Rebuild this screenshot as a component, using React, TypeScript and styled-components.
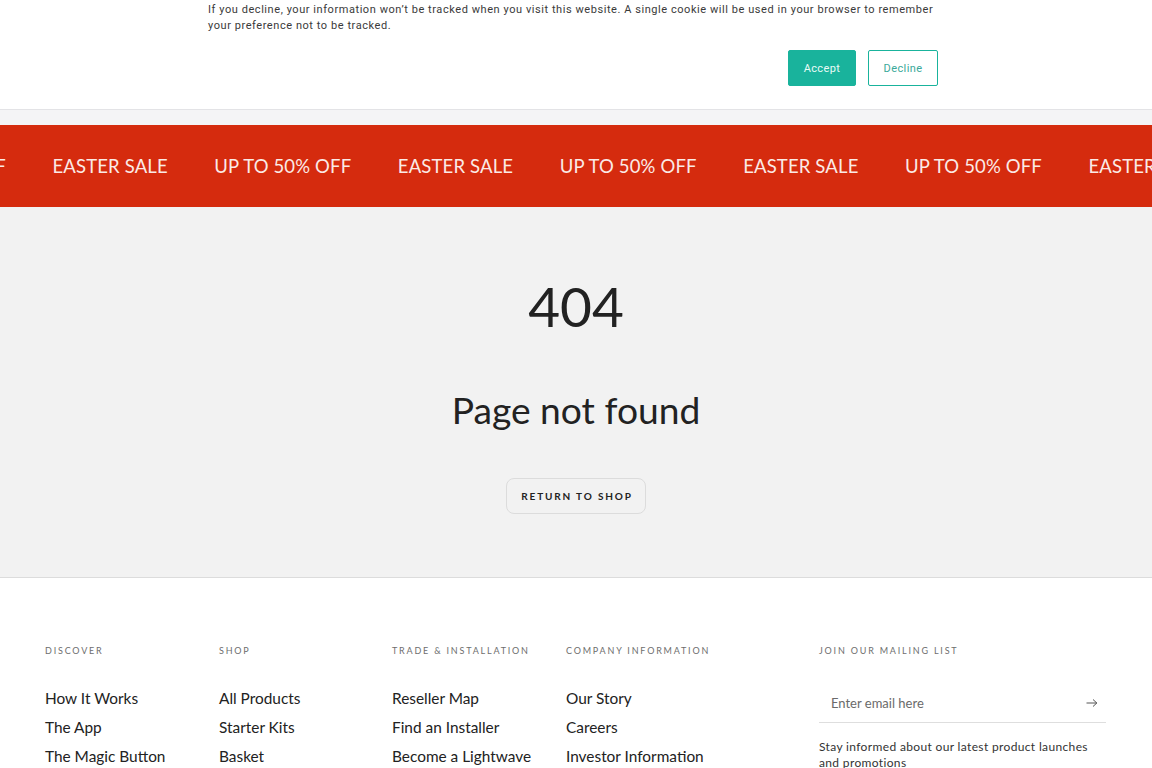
import React from "react";
import styled, { createGlobalStyle } from "styled-components";

const Global = createGlobalStyle`
  html, body { margin: 0; padding: 0; background: #ffffff; }
  body { font-family: Lato, "Noto Sans", sans-serif; color: #222; overflow: hidden; }
  * { box-sizing: border-box; }
`;

const Page = styled.div`
  width: 1152px;
  height: 768px;
  overflow: hidden;
  display: flex;
  flex-direction: column;
  & > * { flex-shrink: 0; }
`;

const CookieBar = styled.div`
  background: #fff;
  height: 110px;
  border-bottom: 1px solid #e3e3e6;
  padding: 2px 214px 0 208px;
  display: flex;
  flex-direction: column;
`;

const CookieText = styled.p`
  margin: 0;
  font-family: Roboto, "Liberation Sans", sans-serif;
  font-size: 11px;
  line-height: 16px;
  letter-spacing: 0.56px;
  color: #3a3a3a;
`;

const CookieActions = styled.div`
  display: flex;
  justify-content: flex-end;
  gap: 12px;
  margin-top: 16px;
`;

const CookieButton = styled.button<{ $primary?: boolean }>`
  height: 36px;
  padding: 0;
  width: ${(p) => (p.$primary ? "68px" : "70px")};
  border-radius: 2px;
  border: 1px solid #19b39c;
  background: ${(p) => (p.$primary ? "#19b39c" : "#fff")};
  color: ${(p) => (p.$primary ? "#e9fbf7" : "#3aa99a")};
  font-family: Roboto, "Liberation Sans", sans-serif;
  font-size: 11px;
  letter-spacing: 0.4px;
`;

const Spacer = styled.div`
  height: 15px;
  background: #f4f4f6;
`;

const Marquee = styled.div`
  height: 82px;
  background: #d52b0e;
  display: flex;
  align-items: center;
  overflow: hidden;
`;

const MarqueeTrack = styled.div`
  display: flex;
  gap: 46.5px;
  white-space: nowrap;
  margin-left: -131px;
`;

const MarqueeItem = styled.span`
  font-family: Lato, sans-serif;
  font-size: 18.5px;
  color: #fbeae6;
  letter-spacing: 0.15px;
`;

const Main = styled.main`
  background: #f2f2f2;
  height: 371px;
  border-bottom: 1px solid #dcdcdc;
  display: flex;
  flex-direction: column;
  align-items: center;
  padding-top: 66px;
`;

const Code = styled.h1`
  margin: 0;
  font-family: Lato, sans-serif;
  font-weight: 400;
  font-size: 55px;
  line-height: 66px;
  color: #222;
`;

const Title = styled.h2`
  margin: 49px 0 0;
  font-family: Lato, sans-serif;
  font-weight: 400;
  font-size: 37.2px;
  line-height: 43px;
  color: #222;
`;

const ReturnButton = styled.button`
  margin-top: 47px;
  height: 36px;
  padding: 0 12px 0 14px;
  border: 1px solid #dcdcdc;
  border-radius: 8px;
  background: #f2f2f2;
  font-family: Lato, sans-serif;
  font-weight: 700;
  font-size: 10px;
  letter-spacing: 1.85px;
  color: #222;
`;

const Footer = styled.footer`
  background: #fff;
  flex: 1;
  padding: 67px 46px 0 45px;
  display: grid;
  grid-template-columns: 174px 173px 174px 253px 1fr;
`;

const Column = styled.div`
  display: flex;
  flex-direction: column;
`;

const Heading = styled.h3`
  margin: 0 0 27px;
  font-family: Lato, sans-serif;
  font-weight: 400;
  font-size: 9px;
  line-height: 12px;
  letter-spacing: 1.8px;
  color: #6e6e6e;
  text-transform: uppercase;
`;

const LinkList = styled.ul`
  list-style: none;
  margin: 0;
  padding: 0;
  display: flex;
  flex-direction: column;
`;

const LinkItem = styled.li`
  font-family: Lato, sans-serif;
  font-size: 15.4px;
  line-height: 29px;
  color: #222;
  white-space: nowrap;
`;

const EmailRow = styled.div`
  display: flex;
  align-items: center;
  justify-content: space-between;
  height: 39px;
  padding: 0 8px 0 12px;
  border-bottom: 1px solid #dedede;
`;

const EmailPlaceholder = styled.span`
  font-family: Lato, sans-serif;
  font-size: 13px;
  color: #6a6a6a;
`;

const Blurb = styled.p`
  margin: 16px 0 0;
  max-width: 285px;
  font-family: Lato, sans-serif;
  font-size: 12px;
  line-height: 16px;
  letter-spacing: 0.35px;
  color: #333;
`;

const columns = [
  { title: "Discover", links: ["How It Works", "The App", "The Magic Button"] },
  { title: "Shop", links: ["All Products", "Starter Kits", "Basket"] },
  { title: "Trade & Installation", links: ["Reseller Map", "Find an Installer", "Become a Lightwave"] },
  { title: "Company Information", links: ["Our Story", "Careers", "Investor Information"] },
];

const items = [
  "UP TO 50% OFF",
  "EASTER SALE",
  "UP TO 50% OFF",
  "EASTER SALE",
  "UP TO 50% OFF",
  "EASTER SALE",
  "UP TO 50% OFF",
  "EASTER SALE",
];

export default function App() {
  return (
    <Page>
      <Global />
      <CookieBar>
        <CookieText>
          If you decline, your information won’t be tracked when you visit this website. A single cookie will be used in your browser to remember your preference not to be tracked.
        </CookieText>
        <CookieActions>
          <CookieButton $primary>Accept</CookieButton>
          <CookieButton>Decline</CookieButton>
        </CookieActions>
      </CookieBar>
      <Spacer />
      <Marquee>
        <MarqueeTrack>
          {items.map((t, i) => (
            <MarqueeItem key={i}>{t}</MarqueeItem>
          ))}
        </MarqueeTrack>
      </Marquee>
      <Main>
        <Code>404</Code>
        <Title>Page not found</Title>
        <ReturnButton>RETURN TO SHOP</ReturnButton>
      </Main>
      <Footer>
        {columns.map((c) => (
          <Column key={c.title}>
            <Heading>{c.title}</Heading>
            <LinkList>
              {c.links.map((l) => (
                <LinkItem key={l}>{l}</LinkItem>
              ))}
            </LinkList>
          </Column>
        ))}
        <Column>
          <Heading>Join our mailing list</Heading>
          <EmailRow>
            <EmailPlaceholder>Enter email here</EmailPlaceholder>
            <svg width="12" height="10" viewBox="0 0 12 10" fill="none" stroke="#555" strokeWidth="1">
              <path d="M0.5 5h10.5M7 1.5L10.8 5 7 8.5" />
            </svg>
          </EmailRow>
          <Blurb>Stay informed about our latest product launches and promotions</Blurb>
        </Column>
      </Footer>
    </Page>
  );
}
